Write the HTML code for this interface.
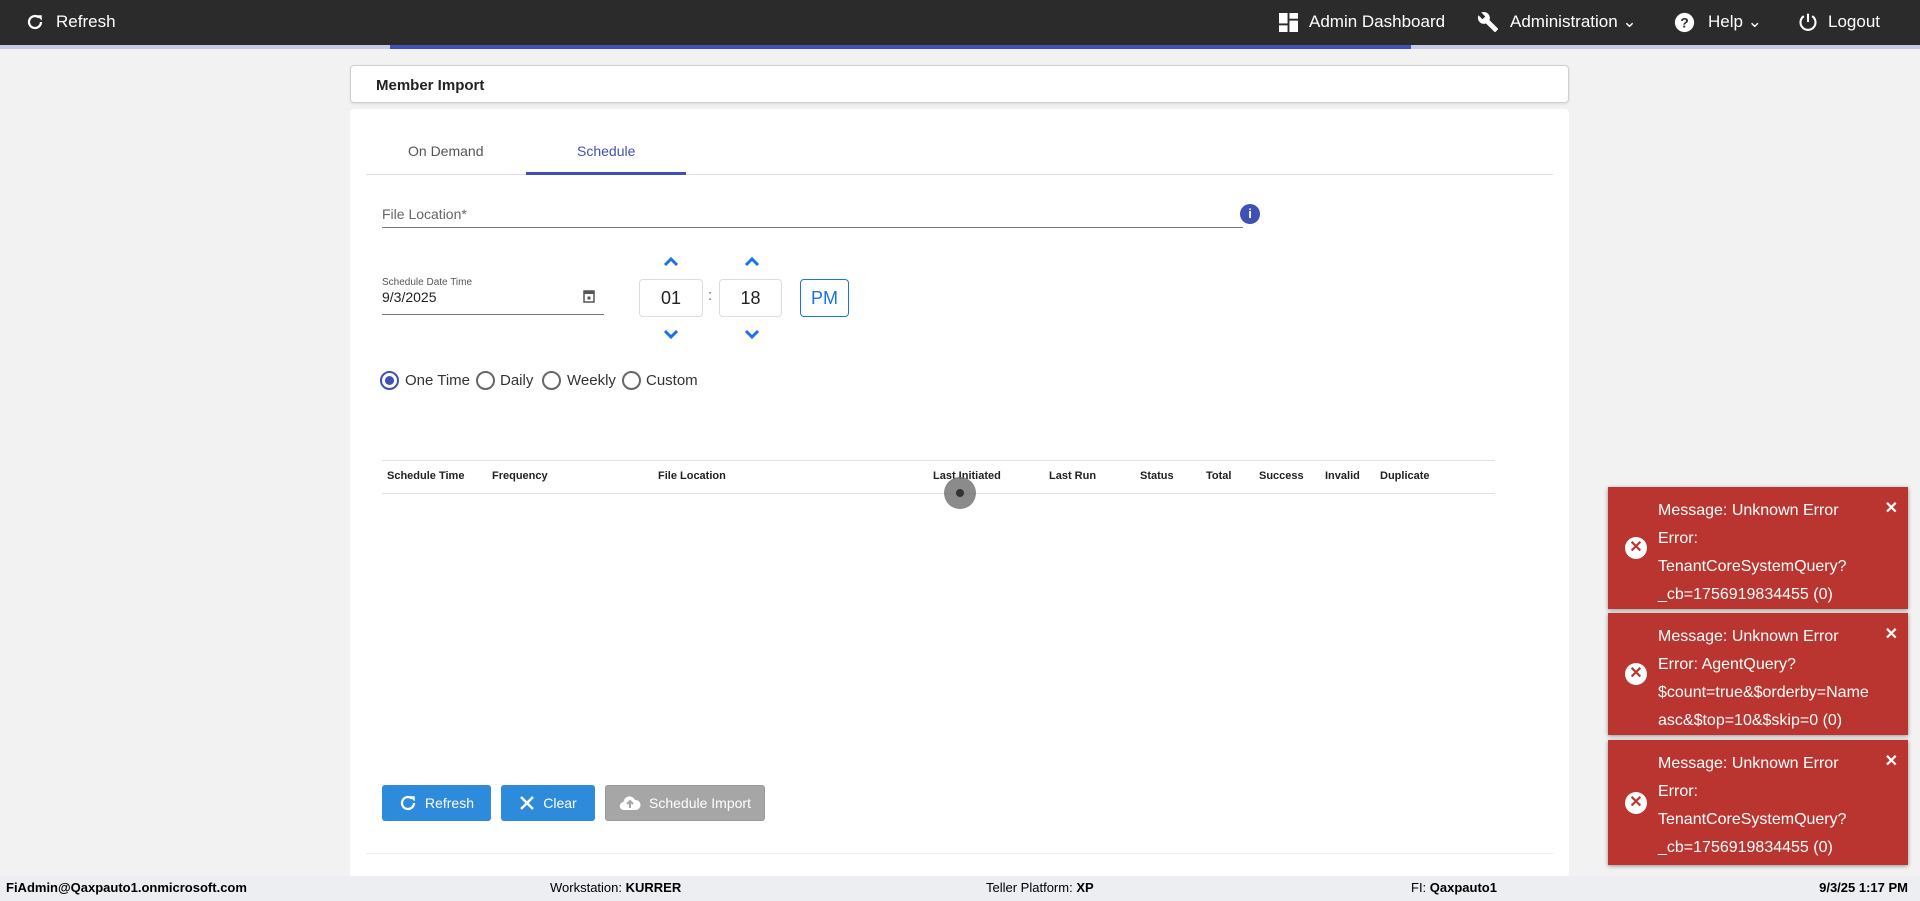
<!DOCTYPE html>
<html><head><meta charset="utf-8"><style>
*{box-sizing:border-box;margin:0;padding:0}
body{width:1920px;height:901px;overflow:hidden;background:#f2f2f2;font-family:"Liberation Sans",Arial,sans-serif;position:relative;color:#222}
.abs{position:absolute}
.hdr{left:0;top:0;width:1920px;height:45px;background:#2b2b2b;color:#fff;font-size:17px}
.hdr span{position:absolute;top:12px}
.bar{top:45px;left:0;width:1920px;height:4px;background:#c5cae9}
.bar2{top:45px;left:390px;width:1021px;height:4px;background:#3f51b5}
.card{background:#fff;border-radius:4px}
.th{position:absolute;top:470px;font-size:11px;font-weight:bold;color:#222}
.btn{position:absolute;top:785px;height:36px;border-radius:3px;color:#fff;font-size:14px;display:flex;align-items:center;justify-content:center;gap:8px}
.ft{position:absolute;top:880px;font-size:13px;font-weight:bold;color:#000}
.ft b{font-weight:bold}
.toast{position:absolute;left:1608px;width:300px;background:#bb3530;color:#fff;font-size:16px;line-height:28px;padding:10px 0 0 50px;box-shadow:0 1px 4px rgba(0,0,0,.4);overflow:hidden}
.toast .ic{position:absolute;left:17px;top:50%;margin-top:-11px;width:22px;height:22px;border-radius:50%;background:#fff;color:#bb3530;font-weight:bold;font-size:16px;line-height:22px;text-align:center}
.toast .x{position:absolute;right:10px;top:8px;font-size:16px;font-weight:bold}
.radio{position:absolute;top:371px;width:19px;height:19px;border:2px solid #666;border-radius:50%}
.rl{position:absolute;top:372px;font-size:15px;color:#333}
.tb{position:absolute;top:279px;height:38px;border:1px solid #ddd;border-radius:4px;font-size:18px;display:flex;align-items:center;justify-content:center}
.chev{position:absolute;color:#1a73e8}
</style></head><body>
<div class="abs hdr">
 <svg class="abs" style="left:26px;top:13px" width="18" height="18" viewBox="0 0 24 24"><path d="M20 12a8 8 0 1 1-2.6-5.9" fill="none" stroke="#fff" stroke-width="3"/><path d="M14 3h7v7z" fill="#fff"/></svg>
 <span style="left:56px">Refresh</span>
 <svg class="abs" style="left:1279px;top:13px" width="19" height="19" viewBox="0 0 20 20" fill="#fff"><rect x="0" y="0" width="9" height="11"/><rect x="11" y="0" width="9" height="6"/><rect x="11" y="8" width="9" height="12"/><rect x="0" y="13" width="9" height="7"/></svg>
 <span style="left:1309px">Admin Dashboard</span>
 <svg class="abs" style="left:1477px;top:11px" width="22" height="22" viewBox="0 0 24 24" fill="#fff"><path d="M22.7 19l-9.1-9.1c.9-2.3.4-5-1.5-6.9-2-2-5-2.4-7.4-1.3L9 6 6 9 1.6 4.7C.4 7.1.9 10.1 2.9 12.1c1.9 1.9 4.6 2.4 6.9 1.5l9.1 9.1c.4.4 1 .4 1.4 0l2.3-2.3c.5-.4.5-1.1.1-1.4z"/></svg>
 <span style="left:1510px">Administration ⌄</span>
 <svg class="abs" style="left:1674px;top:12px" width="21" height="21" viewBox="0 0 24 24"><circle cx="12" cy="12" r="11" fill="#fff"/><text x="12" y="17.5" text-anchor="middle" font-size="16" font-weight="bold" fill="#2b2b2b" font-family="Liberation Sans">?</text></svg>
 <span style="left:1708px">Help ⌄</span>
 <svg class="abs" style="left:1798px;top:12px" width="20" height="20" viewBox="0 0 24 24" fill="none" stroke="#fff" stroke-width="2.5"><path d="M7 5a9 9 0 1 0 10 0"/><path d="M12 2v10"/></svg>
 <span style="left:1828px">Logout</span>
</div>
<div class="abs bar"></div><div class="abs bar2"></div>

<div class="abs card" style="left:350px;top:65px;width:1219px;height:38px;border:1px solid #d0d0d0;box-shadow:0 1px 2px rgba(0,0,0,.1)">
 <div style="position:absolute;left:25px;top:11px;font-size:15px;font-weight:bold;color:#222">Member Import</div>
</div>
<div class="abs card" style="left:350px;top:109px;width:1219px;height:768px"></div>
<div class="abs" style="left:366px;top:853px;width:1187px;height:1px;background:#eee"></div>

<div class="abs" style="left:408px;top:143px;font-size:14px;color:#555">On Demand</div>
<div class="abs" style="left:577px;top:143px;font-size:14px;color:#3f51b5">Schedule</div>
<div class="abs" style="left:366px;top:174px;width:1187px;height:1px;background:#ddd"></div>
<div class="abs" style="left:526px;top:172px;width:160px;height:3px;background:#3f51b5"></div>

<div class="abs" style="left:382px;top:206px;font-size:14px;color:#666">File Location*</div>
<div class="abs" style="left:382px;top:227px;width:861px;height:1px;background:#777"></div>
<div class="abs" style="left:1240px;top:204px;width:20px;height:20px;border-radius:50%;background:#3f51b5;color:#fff;font-size:13px;font-weight:bold;text-align:center;line-height:20px">i</div>

<div class="abs" style="left:382px;top:277px;font-size:10px;color:#555">Schedule Date Time</div>
<div class="abs" style="left:382px;top:289px;font-size:14px;color:#222">9/3/2025</div>
<svg class="abs" style="left:583px;top:289px" width="12" height="14" viewBox="0 0 12 14"><rect x="1" y="2" width="10" height="11" fill="none" stroke="#555" stroke-width="1.5"/><rect x="1" y="2" width="10" height="3" fill="#555"/><rect x="4.5" y="7.5" width="3" height="3" fill="#555"/></svg>
<div class="abs" style="left:382px;top:314px;width:222px;height:1px;background:#777"></div>

<svg class="chev" style="left:663px;top:256px" width="16" height="12" viewBox="0 0 16 12"><path d="M2 9l6-6 6 6" fill="none" stroke="#1a73e8" stroke-width="3"/></svg>
<svg class="chev" style="left:744px;top:256px" width="16" height="12" viewBox="0 0 16 12"><path d="M2 9l6-6 6 6" fill="none" stroke="#1a73e8" stroke-width="3"/></svg>
<svg class="chev" style="left:663px;top:328px" width="16" height="12" viewBox="0 0 16 12"><path d="M2 3l6 6 6-6" fill="none" stroke="#1a73e8" stroke-width="3"/></svg>
<svg class="chev" style="left:744px;top:328px" width="16" height="12" viewBox="0 0 16 12"><path d="M2 3l6 6 6-6" fill="none" stroke="#1a73e8" stroke-width="3"/></svg>
<div class="tb" style="left:639px;width:64px">01</div>
<div class="abs" style="left:708px;top:287px;font-size:15px;color:#666">:</div>
<div class="tb" style="left:719px;width:63px">18</div>
<div class="tb" style="left:800px;width:49px;border-color:#1a73e8;color:#1a73e8">PM</div>

<div class="radio" style="left:380px;border-color:#3f51b5"><div style="position:absolute;left:3px;top:3px;width:9px;height:9px;border-radius:50%;background:#3f51b5"></div></div>
<div class="rl" style="left:405px">One Time</div>
<div class="radio" style="left:476px"></div><div class="rl" style="left:500px">Daily</div>
<div class="radio" style="left:542px"></div><div class="rl" style="left:567px">Weekly</div>
<div class="radio" style="left:622px"></div><div class="rl" style="left:646px">Custom</div>

<div class="abs" style="left:382px;top:460px;width:1113px;height:1px;background:#e0e0e0"></div>
<div class="abs" style="left:382px;top:493px;width:1113px;height:1px;background:#e0e0e0"></div>
<div class="th" style="left:387px">Schedule Time</div>
<div class="th" style="left:492px">Frequency</div>
<div class="th" style="left:658px">File Location</div>
<div class="th" style="left:933px">Last Initiated</div>
<div class="th" style="left:1049px">Last Run</div>
<div class="th" style="left:1140px">Status</div>
<div class="th" style="left:1206px">Total</div>
<div class="th" style="left:1259px">Success</div>
<div class="th" style="left:1325px">Invalid</div>
<div class="th" style="left:1380px">Duplicate</div>
<div class="abs" style="left:944px;top:477px;width:32px;height:32px;border-radius:50%;background:rgba(110,110,110,.8)"><div style="position:absolute;left:12px;top:12px;width:8px;height:8px;border-radius:50%;background:#333"></div></div>

<div class="btn" style="left:382px;width:109px;background:#2e8bdb">
 <svg width="18" height="18" viewBox="0 0 24 24"><path d="M20 12a8 8 0 1 1-2.6-5.9" fill="none" stroke="#fff" stroke-width="3"/><path d="M14 3h7v7z" fill="#fff"/></svg>Refresh</div>
<div class="btn" style="left:501px;width:94px;background:#2e8bdb">
 <svg width="16" height="16" viewBox="0 0 16 16"><path d="M2 2l12 12M14 2L2 14" stroke="#fff" stroke-width="2.5"/></svg>Clear</div>
<div class="btn" style="left:605px;width:160px;background:#a6a6a6;border:1px solid #999">
 <svg width="22" height="16" viewBox="0 0 22 16"><path d="M5 15a4 4 0 0 1-.5-8A6 6 0 0 1 16 5a4.5 4.5 0 0 1 1 10z" fill="#fff"/><path d="M11 13V7M8 9l3-3 3 3" stroke="#a6a6a6" stroke-width="2" fill="none"/></svg>Schedule Import</div>

<div class="abs" style="left:0;top:876px;width:1920px;height:25px;background:#eceef1"></div>
<div class="ft" style="left:6px">FiAdmin@Qaxpauto1.onmicrosoft.com</div>
<div class="ft" style="left:550px;font-weight:normal">Workstation: <b>KURRER</b></div>
<div class="ft" style="left:986px;font-weight:normal">Teller Platform: <b>XP</b></div>
<div class="ft" style="left:1411px;font-weight:normal">FI: <b>Qaxpauto1</b></div>
<div class="ft" style="right:12px">9/3/25 1:17 PM</div>

<div class="toast" style="top:487px;height:122px"><div class="ic">✕</div><div class="x">✕</div>Message: Unknown Error<br>Error:<br>TenantCoreSystemQuery?<br>_cb=1756919834455 (0)</div>
<div class="toast" style="top:613px;height:122px"><div class="ic">✕</div><div class="x">✕</div>Message: Unknown Error<br>Error: AgentQuery?<br>$count=true&amp;$orderby=Name<br>asc&amp;$top=10&amp;$skip=0 (0)</div>
<div class="toast" style="top:740px;height:125px"><div class="ic">✕</div><div class="x">✕</div>Message: Unknown Error<br>Error:<br>TenantCoreSystemQuery?<br>_cb=1756919834455 (0)</div>
</body></html>
